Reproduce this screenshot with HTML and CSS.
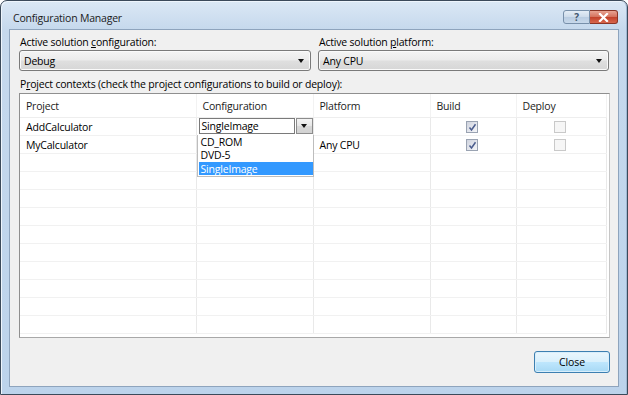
FILE: index.html
```html
<!DOCTYPE html>
<html>
<head>
<meta charset="utf-8">
<link rel="stylesheet" href="styles.css">
</head>
<body>
<div class="window">
  <div class="titlebar">
    <span class="title">Configuration Manager</span>
    <div class="caption-btns">
      <span class="cap help">?</span>
      <span class="cap close-x">
        <svg width="11" height="9" viewBox="0 0 11 9"><path d="M2 1 L9 8 M9 1 L2 8" stroke="#fff" stroke-width="2.2" stroke-linecap="square"/></svg>
      </span>
    </div>
  </div>
  <div class="client">
    <div class="top">
      <div class="field">
        <div class="label">Active solution <u>c</u>onfiguration:</div>
        <div class="combo"><span>Debug</span><span class="arrow"></span></div>
      </div>
      <div class="field">
        <div class="label">Active solution <u>p</u>latform:</div>
        <div class="combo"><span>Any CPU</span><span class="arrow"></span></div>
      </div>
    </div>
    <div class="label ctx">P<u>r</u>oject contexts (check the project configurations to build or deploy):</div>
    <div class="grid">
      <table>
        <colgroup>
          <col class="c1"><col class="c2"><col class="c3"><col class="c4"><col class="c5">
        </colgroup>
        <thead>
          <tr><th>Project</th><th>Configuration</th><th>Platform</th><th>Build</th><th>Deploy</th></tr>
        </thead>
        <tbody>
          <tr>
            <td>AddCalculator</td>
            <td class="cfg">
              <div class="cellcombo">
                <span class="cbtext">SingleImage</span>
                <span class="cbbtn"><span class="arrow"></span></span>
              </div>
              <div class="droplist">
                <div class="item">CD_ROM</div>
                <div class="item">DVD-5</div>
                <div class="item sel">SingleImage</div>
              </div>
            </td>
            <td></td>
            <td class="chk"><span class="box checked"><svg width="9" height="9" viewBox="0 0 9 9"><path d="M1.5 4.5 L3.5 7 L7.5 1.2" fill="none" stroke="#4b5d8e" stroke-width="1.5"/></svg></span></td>
            <td class="chk"><span class="box disabled"></span></td>
          </tr>
          <tr>
            <td>MyCalculator</td>
            <td></td>
            <td>Any CPU</td>
            <td class="chk"><span class="box checked"><svg width="9" height="9" viewBox="0 0 9 9"><path d="M1.5 4.5 L3.5 7 L7.5 1.2" fill="none" stroke="#4b5d8e" stroke-width="1.5"/></svg></span></td>
            <td class="chk"><span class="box disabled"></span></td>
          </tr>
          <tr><td></td><td></td><td></td><td></td><td></td></tr>
          <tr><td></td><td></td><td></td><td></td><td></td></tr>
          <tr><td></td><td></td><td></td><td></td><td></td></tr>
          <tr><td></td><td></td><td></td><td></td><td></td></tr>
          <tr><td></td><td></td><td></td><td></td><td></td></tr>
          <tr><td></td><td></td><td></td><td></td><td></td></tr>
          <tr><td></td><td></td><td></td><td></td><td></td></tr>
          <tr><td></td><td></td><td></td><td></td><td></td></tr>
          <tr><td></td><td></td><td></td><td></td><td></td></tr>
          <tr><td></td><td></td><td></td><td></td><td></td></tr>
        </tbody>
      </table>
    </div>
    <div class="footer">
      <button class="btn">Close</button>
    </div>
  </div>
</div>
</body>
</html>
```

FILE: styles.css
```css
* { box-sizing: border-box; }
html, body { margin: 0; padding: 0; background: #ffffff; }
body {
  font-family: "Open Sans", "Noto Sans", sans-serif;
  font-size: 10.5px;
  letter-spacing: -0.2px;
  color: #000;
}
.window {
  width: 628px;
  height: 395px;
  border: 1px solid #3b4a5a;
  border-radius: 7px 7px 0 0;
  background: linear-gradient(180deg, #dbe8f5 0px, #c6d9ed 28px, #bcd3eb 100%);
  padding: 0 8px 7px 8px;
  display: flex;
  flex-direction: column;
  box-shadow: inset 1px 1px 0 #eef5fc, inset -1px 0 0 #9fb8d4;
}
.titlebar {
  height: 28px;
  display: flex;
  align-items: flex-start;
  justify-content: space-between;
}
.title {
  margin-top: 10px;
  margin-left: 4px;
  font-size: 10.5px;
  color: #1a1a1a;
}
.caption-btns {
  display: flex;
  margin-top: 9px;
  margin-right: 1px;
}
.cap {
  height: 14px;
  display: flex;
  align-items: center;
  justify-content: center;
  border: 1px solid #7890aa;
}
.help {
  width: 27px;
  border-radius: 3px 0 0 3px;
  background: linear-gradient(180deg, #e4edf6 0%, #cddbea 50%, #b9cce1 51%, #c8d9eb 100%);
  color: #42576f;
  font-size: 10px;
  font-weight: bold;
  line-height: 1;
}
.close-x {
  width: 28px;
  border-left: none;
  border-color: #8a3526;
  border-radius: 0 3px 3px 0;
  background: linear-gradient(180deg, #e8a493 0%, #d4705b 50%, #c2412a 51%, #d7664c 100%);
}
.client {
  flex: 1;
  background: #f0f0f0;
  border: 1px solid #8ea4bd;
  display: flex;
  flex-direction: column;
  padding: 4px 8px 0 9px;
}
.top {
  display: grid;
  grid-template-columns: 292px 291px;
  column-gap: 7px;
}
.label {
  line-height: 15px;
  padding-left: 1px;
  padding-top: 1px;
  white-space: nowrap;
}
.combo {
  margin-top: 0;
  height: 21px;
  border: 1px solid #7a7a7a;
  border-radius: 3px;
  background: linear-gradient(180deg, #f4f4f4 0%, #ebebeb 48%, #dfdfdf 52%, #d6d6d6 100%);
  display: flex;
  align-items: center;
  justify-content: space-between;
  padding: 1px 5px 0 4px;
  box-shadow: inset 0 0 0 1px #fafafa;
}
.arrow {
  width: 0;
  height: 0;
  border-left: 3.5px solid transparent;
  border-right: 3.5px solid transparent;
  border-top: 4px solid #111;
  margin-right: 1px;
}
.ctx {
  margin-top: 5px;
}
.grid {
  margin-top: 1px;
  height: 245px;
  border: 1px solid #8f8f8f;
  border-right-color: #c6c6c6;
  border-bottom-color: #a8a8a8;
  background: #fff;
  overflow: hidden;
}
table {
  border-collapse: collapse;
  table-layout: fixed;
  width: 586px;
}
col.c1 { width: 176px; }
col.c2 { width: 117px; }
col.c3 { width: 117px; }
col.c4 { width: 86px; }
col.c5 { width: 90px; }
th {
  height: 23px;
  text-align: left;
  font-weight: normal;
  padding: 2px 0 0 6px;
  color: #1b1b1b;
  border-right: 1px solid #f2f2f2;
  border-bottom: 1px solid #eeeeee;
}
td {
  height: 18px;
  padding: 1px 0 0 6px;
  border-right: 1px solid #e9e9e9;
  border-bottom: 1px solid #f1f1f1;
  white-space: nowrap;
}
td.cfg {
  position: relative;
  padding: 0;
}
.cellcombo {
  display: flex;
  height: 16px;
  margin: 0 0 0 2px;
}
.cbtext {
  width: 96px;
  border: 1px solid #7a7a7a;
  background: #fff;
  padding-left: 2px;
  line-height: 15px;
}
.cbbtn {
  width: 17px;
  margin-left: 1px;
  border: 1px solid #8c8c8c;
  background: linear-gradient(180deg, #f4f4f4 0%, #e6e6e6 50%, #d8d8d8 51%, #d2d2d2 100%);
  display: flex;
  align-items: center;
  justify-content: center;
}
.cbbtn .arrow { margin: 0; border-top-width: 4px; }
.droplist {
  position: absolute;
  left: 0;
  top: 17px;
  width: 117px;
  background: #fff;
  border: 1px solid #bdbdbd;
  border-top: none;
  padding: 0 0 1px 1px;
  z-index: 2;
}
.item {
  height: 13px;
  line-height: 14px;
  padding-left: 2px;
  overflow: hidden;
}
.item.sel {
  background: #3399ff;
  color: #fff;
  margin-top: 1px;
}
td.chk { padding: 0; text-align: center; }
td.chk .box { margin-left: -2px; }
.box {
  display: inline-flex;
  align-items: center;
  justify-content: center;
  width: 12px;
  height: 12px;
  vertical-align: middle;
}
.box.checked {
  border: 1px solid #9aa3b2;
  background: linear-gradient(135deg, #cfd3de 0%, #e6e8ee 60%, #f4f5f8 100%);
}
.box.disabled {
  border: 1px solid #c9c9c9;
  background: #f6f6f6;
}
.footer {
  display: flex;
  justify-content: flex-end;
  padding-top: 13px;
}
.btn {
  width: 76px;
  height: 22px;
  font-family: inherit;
  font-size: 10.5px;
  letter-spacing: -0.1px;
  border: 1px solid #3c7fb1;
  border-radius: 3px;
  background: linear-gradient(180deg, #eaf6fd 0%, #d9f0fc 48%, #bee6fd 52%, #a7d9f5 100%);
  box-shadow: inset 0 0 0 1px #d8eefb;
  color: #000;
  padding: 0;
}
```
